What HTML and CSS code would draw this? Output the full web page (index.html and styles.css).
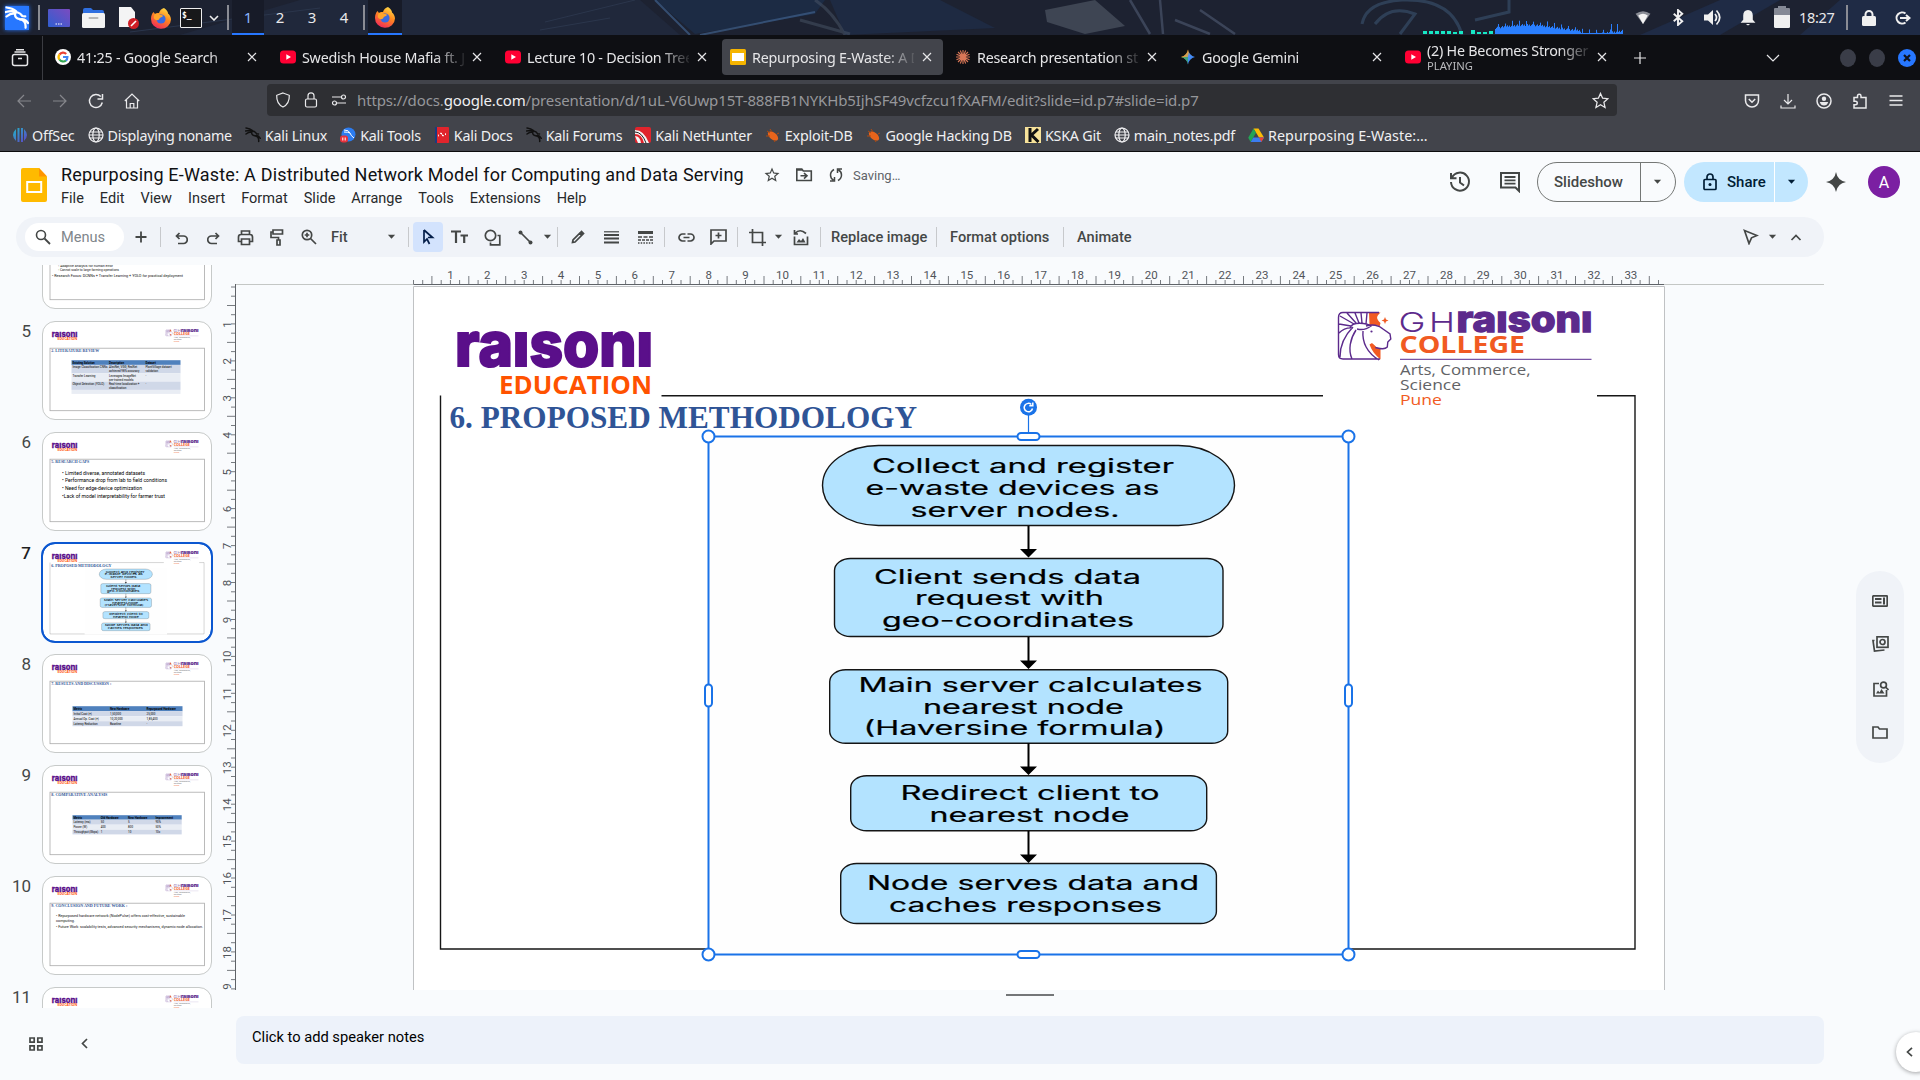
FILE: index.html
```html
<!DOCTYPE html>
<html lang="en">
<head>
<meta charset="utf-8">
<title>Repurposing E-Waste - Google Slides</title>
<link rel="stylesheet" href="styles.css">
</head>
<body>
<svg class="defs" width="0" height="0">
  <defs>
    <linearGradient id="fx-g" x1="0.8" y1="0" x2="0.3" y2="1"><stop offset="0" stop-color="#ffe04a"/><stop offset=".45" stop-color="#ff8a1f"/><stop offset="1" stop-color="#f0285a"/></linearGradient>
    <linearGradient id="desk-g" x1="0" y1="1" x2="1" y2="0"><stop offset="0" stop-color="#2f5fd0"/><stop offset="1" stop-color="#7b4bc0"/></linearGradient>
    <linearGradient id="gem-g" x1="0" y1="0" x2="1" y2="1"><stop offset="0" stop-color="#f04a3a"/><stop offset=".3" stop-color="#f0a030"/><stop offset=".5" stop-color="#4a90f5"/><stop offset="1" stop-color="#2f7bf5"/></linearGradient>
    <linearGradient id="off-g" x1="0" y1="0" x2="1" y2="1"><stop offset="0" stop-color="#20b8c8"/><stop offset="1" stop-color="#6040c8"/></linearGradient>
    <symbol id="i-x" viewBox="0 0 16 16"><path d="M4 4l8 8M12 4l-8 8" class="ln"/></symbol>
    <symbol id="i-arrow" viewBox="0 0 10 6"><path d="M1 .5h8L5 5z" fill="currentColor"/></symbol>
    <symbol id="i-globe" viewBox="0 0 16 16"><g class="ln"><circle cx="8" cy="8" r="7"/><ellipse cx="8" cy="8" rx="3.2" ry="7"/><path d="M1 8h14M2 5h12M2 11h12"/></g></symbol>
    <symbol id="i-dragon" viewBox="0 0 16 16"><path d="M1 1c3 .3 5 1.200 6.500 2.500M.5 4c3-.8 5-.8 7 0 2 .4 3.200 1.200 4 2.700l2 .2M1 7c2-1.700 4-2.200 6-2M7 4.500c-1 2.600.7 3.800 3 4.300 2.800.6 4 2.600 3.700 5.700M10 9c1.700-.8 4 .2 5.300 2.300" fill="none" stroke="currentColor" stroke-width="1.500" stroke-linecap="round"/></symbol>
    <symbol id="i-yt" viewBox="0 0 16 16"><rect y="1.500" width="16" height="13" rx="3.500" fill="#ff0033"/><path d="M6.300 5.300v5.400L11 8z" fill="#fff"/></symbol>
    <symbol id="i-fox" viewBox="0 0 22 22"><path d="M14 1c3 2 4 4 4 5.500 1.500 1 3 3.500 3 6A10 9.500 0 0 1 1 12c0-3 1-5.500 2.500-7l1.500 2c1.500-1 3-1.200 4-1 .8-2.500 2.500-4.200 5-5z" fill="url(#fx-g)"/><circle cx="11" cy="12" r="4.600" fill="#3a6ae0"/><path d="M5 7c2-1 4-.5 5 1 1.500 0 3 .2 3 1-.5 1.500-3 1-3.500 2.500-.3 1.500-2 2-3.500 1.500C3 12 3.500 9 5 7z" fill="#ffa52b"/></symbol>
    <symbol id="i-bug" viewBox="0 0 16 16"><ellipse cx="8" cy="9" rx="6" ry="3.400" transform="rotate(38 8 9)" fill="#e8641b"/><path d="M2 4l3 2M5 2l2 3M1 9l4 0M9 13l1 2M12 7l2-1" stroke="#b04a10" fill="none"/></symbol>
    <g id="brand-left">
      <text class="brand-bold raisoni-l" x="455" y="366.300" textLength="198" lengthAdjust="spacingAndGlyphs">raısonı</text>
      <text class="edu" x="499" y="394" textLength="153" lengthAdjust="spacingAndGlyphs">EDUCATION</text>
    </g>
    <g id="brand-right">
      <g fill="none" stroke="#5c2a8c" stroke-width="1.400">
        <path d="M1369 312.500h11.500c-4.500 4-4.500 6 0 10.500l-1 4-10-2zM1372 343l8.500 6v10.500c-5-4-9-9-11-15z" fill="#f15a22" stroke="none"/>
        <path d="M1371 326c5-2 9 0 12 3l7 5 .8 5-3 3-.5 5c-3 3-7 1.500-11 0l-4-4c-2-6-1-12-1.300-17z" fill="#fff" stroke="none"/>
        <path d="M1366 326c6-2 13-1 17 3l7 5 .8 5-3 3-.5 5c-3 3-7 1.500-12 .5"/>
        <path d="M1380 359h-37q-4.500 0-4.500-4.500v-37q0-5 4.500-5h36M1339 324l12 2M1340 316l14 8M1347 313l9 10M1355 313l4 10M1361 313l1 10M1367 313l-1 11M1339 333q6-6 14-5M1350 328c2-7 17-5 21-2-5 4-10 4-14 3M1353 327c-9 9-13 19-13 30M1356 330c-6 9-8 20-4 29M1363 331c-1 11 4 22 16 29" />
      </g>
      <circle cx="1371.500" cy="331.500" r="1.100" fill="#5c2a8c"/>
      <path d="M1385 317l1 2.500 2.500 1-2.500 1-1 2.500-1-2.500-2.500-1 2.500-1z" fill="#f15a22"/>
      <text class="gh" x="1398.500" y="331.700" textLength="27" lengthAdjust="spacingAndGlyphs">G</text>
      <text class="gh" x="1429" y="331.700" textLength="26" lengthAdjust="spacingAndGlyphs">H</text>
      <text class="brand-bold raisoni-r" x="1456.500" y="331.700" textLength="136" lengthAdjust="spacingAndGlyphs">raısonı</text>
      <text class="college" x="1399.500" y="353" textLength="125.500" lengthAdjust="spacingAndGlyphs">COLLEGE</text>
      <path d="M1400 359.300h191.500" stroke="#7a55a5" stroke-width="1.200"/>
      <text class="dept" x="1400" y="375" textLength="130.500" lengthAdjust="spacingAndGlyphs">Arts, Commerce,</text>
      <text class="dept" x="1400" y="390" textLength="61" lengthAdjust="spacingAndGlyphs">Science</text>
      <text class="dept city" x="1400" y="404.500" textLength="42" lengthAdjust="spacingAndGlyphs">Pune</text>
    </g>
  </defs>
</svg>

<div class="panel">
  <svg class="wall" width="1920" height="35" viewBox="0 0 1920 35" preserveAspectRatio="none">
    <rect width="1920" height="35" fill="#1d2231"/>
    <path d="M180 35L300 0H640L680 35z" fill="#20283b"/>
    <path d="M655 0h170l-10 14-120 20z" fill="#1c2b44"/>
    <path d="M655 0l35 35M815 12L700 35" stroke="#3f608a" stroke-width="2" fill="none" opacity=".7"/>
    <path d="M830 0h110l55 28-150 7z" fill="#1e2a42"/>
    <path d="M815 0q18 12 30 35M800 20l50 14" stroke="#4a5568" stroke-width="3" fill="none" opacity=".5"/>
    <path d="M1045 10L1095 0l30 26-40 8-38-12z" fill="#3e4553"/>
    <path d="M1130 0l20 34M1160 0l3 34M1175 20l35 14M1200 10l35 24" stroke="#5a6580" stroke-width="2.500" fill="none" opacity=".5"/>
    <path d="M1362 24q4-22 40-24 50-2 60 35M1375 24q15-20 40-10l-15 20M1475 20l34-8V0" stroke="#364b66" stroke-width="3" fill="none" opacity=".7"/>
    <path d="M545 22l90-22M540 30l70-12M130 32l190-24" stroke="#2b364c" fill="none"/>
    <path d="M1640 35l80-35h60l-60 35zM1800 35l40-35h80v35z" fill="#1f2b45"/>
  </svg>
  <div class="panel-left">
    <span class="kali"><svg width="24" height="24" viewBox="0 0 16 16"><use href="#i-dragon" width="16" height="16"/></svg></span>
    <i class="psep"></i>
    <svg class="p-desk" width="22" height="18" viewBox="0 0 22 18"><rect width="22" height="18" rx="1" fill="url(#desk-g)"/><path d="M7.500 15h1.500M10 15h1.500M12.500 15h1.500" stroke="#fff" stroke-width="1.200"/></svg>
    <svg class="p-folder" width="23" height="20" viewBox="0 0 23 20"><path d="M1 2q0-2 2-2h6l2 2h9q2 0 2 2v6H1z" fill="#2f6fe0"/><rect y="5" width="23" height="15" rx="1.500" fill="#f2f2f2"/><rect x="6.500" y="9" width="10" height="2" rx="1" fill="#b8b8b8"/></svg>
    <svg class="p-doc" width="22" height="22" viewBox="0 0 22 22"><path d="M1 0h12l4 5v15H1z" fill="#f4f4f4"/><circle cx="15.500" cy="16.500" r="5.500" fill="#d01f26"/><path d="M13 19l5-5" stroke="#fff" stroke-width="1.600"/></svg>
    <svg class="p-fox" width="22" height="22"><use href="#i-fox"/></svg>
    <span class="term">$_</span>
    <svg class="p-chev" width="10" height="6" viewBox="0 0 10 6"><path d="M1 1l4 4 4-4" fill="none" stroke="#eee" stroke-width="1.600"/></svg>
    <i class="psep"></i>
    <span class="ws on">1</span><span class="ws">2</span><span class="ws">3</span><span class="ws">4</span>
    <i class="psep"></i>
    <span class="task"><svg width="22" height="22"><use href="#i-fox"/></svg></span>
  </div>
  <div class="panel-right">
    <svg id="cpu" width="202" height="35" viewBox="0 0 202 35"></svg>
    <svg class="tray" width="16" height="16" viewBox="0 0 16 16"><path d="M1 4.500q7-5 14 0L8 14z" fill="#8a8d96"/><path d="M3.500 6q4.500-3 9 0L8 14z" fill="#f4f4f4"/></svg>
    <svg class="tray" width="16" height="16" viewBox="0 0 16 16"><path d="M4 4.500l8 7-4 3.500V1l4 3.500-8 7" fill="none" stroke="#f0f0f0" stroke-width="1.800"/></svg>
    <svg class="tray" width="18" height="16" viewBox="0 0 18 16"><path d="M0 5h4l5-4.500v15L4 11H0z" fill="#f0f0f0"/><path d="M11 4.500q3 3.500 0 7M12.500 1q6.500 7 0 14" fill="none" stroke="#f0f0f0" stroke-width="1.700"/></svg>
    <svg class="tray" width="16" height="16" viewBox="0 0 16 16"><path d="M8 1c3 0 4.500 2 4.500 5v4L15 13H1l2.500-3V6C3.500 3 5 1 8 1zM6 14h4l-2 1.500z" fill="#f0f0f0"/></svg>
    <svg class="batt" width="16" height="22" viewBox="0 0 16 22"><path d="M4 0h8v2h3q1 0 1 1v7H0V3q0-1 1-1h3z" fill="#858995"/><path d="M0 9h16v11.500q0 1.500-1.500 1.500h-13Q0 22 0 20.500z" fill="#f0f0f0"/></svg>
    <span class="clock">18:27</span>
    <i class="psep r"></i>
    <svg class="lock" width="14" height="16" viewBox="0 0 14 16"><rect y="6" width="14" height="10" rx="1.500" fill="#f0f0f0"/><path d="M3.500 7V4.500a3.500 3.500 0 0 1 7 0V7" fill="none" stroke="#f0f0f0" stroke-width="2"/></svg>
    <svg class="out" width="16" height="14" viewBox="0 0 16 14"><path d="M10.500 2.500A5.600 5.600 0 1 0 10.500 11.500M5 7h9M11 4l3.500 3L11 10" fill="none" stroke="#f0f0f0" stroke-width="2"/></svg>
  </div>
</div>

<div class="tabs">
  <div class="fxview"><svg width="18" height="18" viewBox="0 0 18 18"><g class="ln w"><rect x="1.500" y="5.500" width="15" height="11" rx="2"/><path d="M3.500 3h11M5 .8h8M7 9.500h4"/></g></svg></div>
  <div class="tab"><svg width="16" height="16" viewBox="0 0 16 16"><circle cx="8" cy="8" r="8" fill="#fff"/><g fill="none" stroke-width="2.200"><path d="M4.500 5.500A4.400 4.400 0 0 1 11.200 5" stroke="#ea4335"/><path d="M4.500 5.300a4.600 4.600 0 0 0 0 5.400" stroke="#fbbc05"/><path d="M4.500 10.500a4.400 4.400 0 0 0 6.500 1" stroke="#34a853"/><path d="M8 8h4.400q0 2.300-1.500 3.600" stroke="#4285f4"/></g></svg><span class="tt">41:25 - Google Search</span><svg class="x" width="16" height="16"><use href="#i-x"/></svg></div>
  <div class="tab"><svg width="16" height="16"><use href="#i-yt"/></svg><span class="tt">Swedish House Mafia ft. J</span><svg class="x" width="16" height="16"><use href="#i-x"/></svg></div>
  <div class="tab"><svg width="16" height="16"><use href="#i-yt"/></svg><span class="tt">Lecture 10 - Decision Tree</span><svg class="x" width="16" height="16"><use href="#i-x"/></svg></div>
  <div class="tab sel"><svg width="16" height="16" viewBox="0 0 16 16"><rect width="16" height="16" rx="1.500" fill="#f5b400"/><rect x="2" y="4" width="12" height="8" fill="#fff"/></svg><span class="tt">Repurposing E-Waste: A D</span><svg class="x" width="16" height="16"><use href="#i-x"/></svg></div>
  <div class="tab"><svg width="16" height="16" viewBox="-8 -8 16 16"><path d="M0-7V7M-7 0H7M-5-5L5 5M-5 5L5-5M-2.700-6.500L2.700 6.500M2.700-6.500L-2.700 6.500M-6.500-2.700L6.500 2.700M-6.500 2.700L6.500-2.700" stroke="#d97757" stroke-width="1.100"/></svg><span class="tt">Research presentation str</span><svg class="x" width="16" height="16"><use href="#i-x"/></svg></div>
  <div class="tab"><svg width="16" height="16" viewBox="0 0 16 16"><path d="M8 .5q1 6 7 7.500-6 1.500-7 7.500Q7 9.500 1 8q6-1.500 7-7.500z" fill="url(#gem-g)"/><path d="M1 8q6-1.500 7-7.500V8z" fill="#e8a33a" opacity=".6"/><path d="M1 8q6 1.500 7 7.500V8z" fill="#3aa860" opacity=".8"/></svg><span class="tt">Google Gemini</span><svg class="x" width="16" height="16"><use href="#i-x"/></svg></div>
  <div class="tab"><svg width="16" height="16"><use href="#i-yt"/></svg><span class="tt two">(2) He Becomes Stronger I<small>PLAYING</small></span><svg class="x" width="16" height="16"><use href="#i-x"/></svg></div>
  <svg class="newtab" width="14" height="14" viewBox="0 0 14 14"><path d="M7 1v12M1 7h12" class="ln"/></svg>
  <svg class="tabchev" width="14" height="8" viewBox="0 0 14 8"><path d="M1 1l6 6 6-6" class="ln"/></svg>
  <i class="wb"></i><i class="wb"></i><span class="wb close"><svg width="8" height="8" viewBox="0 0 8 8"><path d="M1 1l6 6M7 1L1 7" stroke="#10131c" stroke-width="2.200"/></svg></span>
</div>

<div class="nav">
  <svg class="n dim" width="16" height="16" viewBox="0 0 16 16"><path d="M15 8H2M8 2L2 8l6 6" class="ln"/></svg>
  <svg class="n dim" width="16" height="16" viewBox="0 0 16 16"><path d="M1 8h13M8 2l6 6-6 6" class="ln"/></svg>
  <svg class="n" width="16" height="16" viewBox="0 0 16 16"><path d="M14.300 9.500A6.500 6.500 0 1 1 12.800 3.600M14.500 1v5h-5" class="ln w"/></svg>
  <svg class="n" width="16" height="16" viewBox="0 0 16 16"><path d="M.8 8L8 1l7.200 7M2.500 7v8h11V7M6.200 15v-4.500h3.600V15" class="ln"/></svg>
  <div class="url">
    <svg width="16" height="16" viewBox="0 0 16 16"><path d="M8 1l6.300 2.300C14.500 9 12.500 13 8 15 3.500 13 1.500 9 1.700 3.300z" class="ln"/></svg>
    <svg width="14" height="16" viewBox="0 0 14 16"><rect x="1.500" y="7" width="11" height="8" rx="1.500" class="ln"/><path d="M4 7V3.800a3 3 0 0 1 6 0V7" class="ln"/></svg>
    <svg width="16" height="12" viewBox="0 0 16 12"><g class="ln"><circle cx="12.500" cy="3" r="2"/><circle cx="3.500" cy="9" r="2"/><path d="M1 3h9M6 9h9"/></g></svg>
    <span class="addr">https://docs.<b>google.com</b>/presentation/d/1uL-V6Uwp15T-888FB1NYKHb5IjhSF49vcfzcu1fXAFM/edit?slide=id.p7#slide=id.p7</span>
    <svg class="fav" width="17" height="17" viewBox="0 0 24 24"><path d="M12 2l3 6.800 7.300.7-5.500 5 1.600 7.300L12 18l-6.400 3.800 1.600-7.300-5.500-5L9 8.800z" fill="none" stroke="currentColor" stroke-width="1.800"/></svg>
  </div>
  <div class="nav-right">
    <svg width="16" height="16" viewBox="0 0 16 16"><path d="M1.500 2h13v5.500a6.500 6.500 0 0 1-13 0zM4.800 6L8 9.200 11.200 6" class="ln w"/></svg>
    <svg width="16" height="16" viewBox="0 0 16 16"><path d="M8 1v9.500M4 7l4 4 4-4M1 12.500V15h14v-2.500" class="ln"/></svg>
    <svg width="16" height="16" viewBox="0 0 16 16"><circle cx="8" cy="8" r="7" class="ln w"/><circle cx="8" cy="5.800" r="2.200" fill="currentColor"/><path d="M3.800 9h8.400q-1 3.500-4.200 3.500T3.800 9z" fill="currentColor"/></svg>
    <svg width="16" height="16" viewBox="0 0 16 16"><path d="M2 4.500h3.500V3a1.700 1.700 0 0 1 3.500 0v1.500h5V15H2v-3.200h1.500a1.700 1.700 0 0 0 0-3.500H2z" class="ln w"/></svg>
    <svg width="16" height="16" viewBox="0 0 16 16"><path d="M1.500 3h13M1.500 7.500h13M1.500 12h13" class="ln w"/></svg>
  </div>
</div>

<div class="marks">
  <span class="bm"><svg width="16" height="16" viewBox="0 0 16 16"><path d="M4 2v12Q1 11 1 8t3-6zM5.500 1H7.500v14H5.500zM9 1h2v14H9zM12 2q3 3 3 6t-3 6z" fill="url(#off-g)"/></svg>OffSec</span>
  <span class="bm tight"><svg width="16" height="16"><use href="#i-globe"/></svg>Displaying noname</span>
  <span class="bm"><svg class="blk" width="16" height="16"><use href="#i-dragon"/></svg>Kali Linux</span>
  <span class="bm"><svg width="16" height="16" viewBox="0 0 16 16"><circle cx="8.500" cy="7.500" r="7" fill="#2c7cf0"/><path d="M4 3q5 0 6 3t4 5M4 5q4 0 6 1" stroke="#fff" fill="none"/><rect y="8.500" width="8" height="7" rx="3" fill="#e8323c"/><path d="M2.800 10.500v3M5.200 10.500v3" stroke="#fff"/></svg>Kali Tools</span>
  <span class="bm"><svg width="16" height="16" viewBox="0 0 16 16"><rect x="1" width="14" height="16" rx="1" fill="#e0242c"/><rect x="1" width="2" height="16" fill="#1c3a80"/><path d="M6 6.500q1.500-1.500 2 1t2 1M5 7.800l-1 .7 1 .7M11 6.500l1 .7-1 .7" stroke="#fff" fill="none"/></svg>Kali Docs</span>
  <span class="bm"><svg class="blk" width="16" height="16"><use href="#i-dragon"/></svg>Kali Forums</span>
  <span class="bm"><svg width="16" height="16" viewBox="0 0 16 16"><rect width="16" height="16" rx="2" fill="#e0242c"/><path d="M0 3q9 0 14 13H9Q7 7 0 7zM0 9q5 0 6 7H3" fill="#f5f5f5"/><path d="M0 5q7 0 11 11" stroke="#222" fill="none"/></svg>Kali NetHunter</span>
  <span class="bm"><svg width="16" height="16"><use href="#i-bug"/></svg>Exploit-DB</span>
  <span class="bm"><svg width="16" height="16"><use href="#i-bug"/></svg>Google Hacking DB</span>
  <span class="bm"><svg width="16" height="16" viewBox="0 0 16 16"><rect width="16" height="16" fill="#f7e29a"/><path d="M5 1v14M13 2L6.500 8l7 7" stroke="#111" stroke-width="3" fill="none"/></svg>KSKA Git</span>
  <span class="bm"><svg width="16" height="16"><use href="#i-globe"/></svg>main_notes.pdf</span>
  <span class="bm wide"><svg width="16" height="16" viewBox="0 0 16 16"><path d="M5.500 1.500h5L16 10.500h-5z" fill="#fbbc05"/><path d="M5.500 1.500L8 5.800 2.700 15 .2 10.700z" fill="#23a455"/><path d="M5.300 10.500H16L13.300 15H2.700z" fill="#3b7df0"/><path d="M11 10.500h5L13.300 15z" fill="#ea4335"/></svg>Repurposing E-Waste:…</span>
</div>

<div class="head">
  <svg class="logo" width="26" height="34" viewBox="0 0 26 34"><path d="M2 0h16l8 8.500V32q0 2-2 2H2q-2 0-2-2V2q0-2 2-2z" fill="#ffba00"/><path d="M18 0l8 8.500h-8z" fill="#ff9500"/><rect x="6.200" y="14" width="14" height="10" fill="none" stroke="#fff" stroke-width="2"/></svg>
  <div class="titles">
    <div class="trow"><span class="title">Repurposing E-Waste: A Distributed Network Model for Computing and Data Serving</span>
      <svg class="t1" width="18" height="18" viewBox="0 0 24 24"><path fill="currentColor" d="M22 9.240l-7.190-.620L12 2 9.190 8.630 2 9.240l5.460 4.730L5.820 21 12 17.270 18.180 21l-1.630-7.030L22 9.240zM12 15.400l-3.760 2.270 1-4.280-3.320-2.880 4.380-.380L12 6.100l1.710 4.040 4.380.380-3.320 2.880 1 4.280L12 15.400z"/></svg>
      <svg class="t2" width="18" height="18" viewBox="0 0 18 18"><path d="M1.800 14.500V3h5l1.500 2h8v9.500zM1.800 4h6" fill="none" stroke="currentColor" stroke-width="1.600"/><path d="M5.500 9.800h6M9 7l3 2.800-3 2.800" fill="none" stroke="currentColor" stroke-width="1.600"/></svg>
      <svg class="t3" width="16" height="16" viewBox="0 0 16 16"><path d="M6 2.500Q2.500 4.500 2.500 8T5.500 13M6.500 10v4H2M10 13.500q3.500-2 3.500-5.500T10.500 3M9.500 6V2H14" fill="none" stroke="currentColor" stroke-width="1.500"/></svg>
      <span class="saving">Saving…</span></div>
    <div class="menus"><span>File</span><span>Edit</span><span>View</span><span>Insert</span><span>Format</span><span>Slide</span><span>Arrange</span><span>Tools</span><span>Extensions</span><span>Help</span></div>
  </div>
  <div class="acts">
    <svg class="a1" width="22" height="22" viewBox="0 0 22 22"><path d="M3 6.500A9 9 0 1 1 2 11M2 2v5.200h5.500M11 6v5.500l4 3" fill="none" stroke="currentColor" stroke-width="2"/></svg>
    <svg class="a2" width="22" height="22" viewBox="0 0 22 22"><path d="M2 2h18v18l-3.500-3.500H2z" fill="none" stroke="currentColor" stroke-width="2"/><path d="M5.500 6h11M5.500 9.300h11M5.500 12.600h11" stroke="currentColor" stroke-width="1.800"/></svg>
    <div class="show"><span>Slideshow</span><i><svg width="9" height="6"><use href="#i-arrow"/></svg></i></div>
    <div class="share"><span><svg width="14" height="18" viewBox="0 0 14 18"><rect x="1" y="6.500" width="12" height="10" rx="1" fill="none" stroke="currentColor" stroke-width="1.700"/><path d="M4 6.500V4a3 3 0 0 1 6 0v2.500" fill="none" stroke="currentColor" stroke-width="1.700"/><circle cx="7" cy="11.500" r="1.500" fill="currentColor"/></svg>Share</span><i><svg width="9" height="6"><use href="#i-arrow"/></svg></i></div>
    <svg class="spark" width="20" height="20" viewBox="0 0 20 20"><path d="M10 0q1.500 8.500 10 10-8.500 1.500-10 10Q8.500 11.500 0 10 8.500 8.500 10 0z" fill="currentColor"/></svg>
    <span class="avatar">A</span>
  </div>
</div>

<div class="tools">
  <div class="search"><svg width="16" height="16" viewBox="0 0 16 16"><circle cx="6" cy="6" r="4.500" fill="none" stroke="currentColor" stroke-width="1.600"/><path d="M9.500 9.500L15 15" stroke="currentColor" stroke-width="1.800"/></svg>Menus</div>
  <span class="c"><svg width="12" height="12" viewBox="0 0 12 12"><path d="M6 .5v11M.5 6h11" stroke="currentColor" stroke-width="1.800"/></svg></span>
  <i class="s"></i>
  <span class="c m1"><svg class="d" width="13" height="13" viewBox="0 0 13 13"><path d="M4.500 1L1.500 4l3 3M2 4h6.500a3.500 3.500 0 0 1 0 7.500H3" class="gi"/></svg></span>
  <span class="c"><svg class="d" width="13" height="13" viewBox="0 0 13 13"><path d="M8.500 1l3 3-3 3M11 4H4.500a3.500 3.500 0 0 0 0 7.500H10" class="gi"/></svg></span>
  <span class="c"><svg width="17" height="17" viewBox="0 0 17 17"><path d="M4.500 5V2h8v3M4.500 12.500H1.500V8q0-2.500 2.500-2.500h9q2.500 0 2.500 2.500v4.500h-3M4.500 10h8v5.500h-8z" class="gi"/></svg></span>
  <span class="c"><svg width="15" height="17" viewBox="0 0 15 17"><path d="M3 1h9.500v4H3zM3 3H1v5.500h7.500V11M7 11h3v5H7z" class="gi"/></svg></span>
  <span class="c"><svg width="16" height="16" viewBox="0 0 16 16"><circle cx="6" cy="6" r="4.700" class="gi"/><path d="M9.500 9.500L15 15M6 3.700v4.600M3.700 6h4.600" class="gi"/></svg></span>
  <span class="fit">Fit<svg width="9" height="6"><use href="#i-arrow"/></svg></span>
  <i class="s"></i>
  <span class="c pick"><svg width="14" height="18" viewBox="0 0 14 18"><path d="M3 2v12l3-3 2.500 5M3 2l8.500 7.500H7" class="gi"/></svg></span>
  <span class="c tx"><svg width="17" height="14" viewBox="0 0 17 14"><path d="M0 1.500h10M5 1.500V13M9.500 5.500H17M13.200 5.500V13" stroke="currentColor" stroke-width="2.200"/></svg></span>
  <span class="c shp"><svg width="17" height="17" viewBox="0 0 17 17"><circle cx="6.500" cy="6.500" r="5.200" class="gi"/><path d="M13.500 6.500h2.300v9.300H6.500v-2.300" class="gi"/></svg></span>
  <span class="c line"><svg width="15" height="15" viewBox="0 0 15 15"><circle cx="2.500" cy="2.500" r="2" fill="currentColor"/><circle cx="12.500" cy="12.500" r="2" fill="currentColor"/><path d="M2.500 2.500l10 10" class="gi"/></svg></span>
  <svg class="ar" width="9" height="6"><use href="#i-arrow"/></svg>
  <i class="s"></i>
  <span class="c m1"><svg width="14" height="14" viewBox="0 0 14 14"><path d="M1.500 12.500l.5-2.500 6.500-6.500 2 2L4 12zM9.500 2.500l1-1 2 2-1 1z" class="gi"/></svg></span>
  <span class="c m1"><svg width="15" height="13" viewBox="0 0 15 13"><path d="M0 .8h15" stroke="currentColor" stroke-width="1.200"/><path d="M0 4h15M0 7.500h15M0 11.500h15" stroke="currentColor" stroke-width="2"/></svg></span>
  <span class="c m2"><svg width="15" height="13" viewBox="0 0 15 13"><path d="M0 1.500h15" stroke="currentColor" stroke-width="3"/><path d="M0 6h15" stroke="currentColor" stroke-width="1.600" stroke-dasharray="4 1.500"/><path d="M0 9h15" stroke="currentColor" stroke-width="1.500" stroke-dasharray="3 1"/><path d="M0 12h15" stroke="currentColor" stroke-width="1.500" stroke-dasharray="1.500 1.200"/></svg></span>
  <i class="s"></i>
  <span class="c m2"><svg width="17" height="9" viewBox="0 0 17 9"><path d="M7.500 1H4.500a3.500 3.500 0 0 0 0 7h3M9.500 1h3a3.500 3.500 0 0 1 0 7h-3M5.500 4.500h6" class="gi"/></svg></span>
  <span class="c"><svg width="17" height="16" viewBox="0 0 17 16"><path d="M1 15V1h15v11H4zM8.500 3.500v6M5.500 6.500h6" class="gi"/></svg></span>
  <i class="s"></i>
  <span class="c crop"><svg width="17" height="17" viewBox="0 0 17 17"><path d="M0 3.500h13.500V17M3.500 0v13.500H17" class="gi"/></svg></span>
  <svg class="ar" width="9" height="6"><use href="#i-arrow"/></svg>
  <span class="c"><svg width="16" height="17" viewBox="0 0 16 17"><path d="M1.500 7.500v8h13v-8M2 4.500Q7-1 13 4.500M1.500 1v4H5" class="gi"/><path d="M3.500 13.500l2.500-3.500 2 2 2-3 2.500 4.500z" fill="currentColor"/></svg></span>
  <i class="s"></i>
  <span class="w1">Replace image</span><i class="s n0"></i><span class="w2">Format options</span><i class="s n0"></i><span class="w3">Animate</span>
  <svg class="ptr" width="16" height="16" viewBox="0 0 16 16"><path d="M1.500 1.500l12.500 5-5.500 2.300-2.500 5.700z" class="gi"/></svg>
  <svg class="ar2" width="9" height="6"><use href="#i-arrow"/></svg>
  <svg class="up" width="12" height="7" viewBox="0 0 12 7"><path d="M1.500 6L6 1.500 10.500 6" class="gi"/></svg>
</div>

<div class="work">
  <div class="film" id="film"></div>
  <svg id="vruler" width="22" height="725" viewBox="214 265 22 725"></svg>
  <div class="stage">
    <svg id="hruler" width="1588" height="20" viewBox="236 265 1588 20"></svg>
    <svg class="canvas" width="1588" height="705" viewBox="236 285 1588 705">
      <path d="M413.500 990V286.500H1664.500V990" fill="#fff" stroke="#c0c2c4"/>
      <g id="slide7">
        <path d="M440.500 395.500V949H1635V395.700H1597M1323 395.700H661.500" fill="none" stroke="#161616" stroke-width="1.400"/>
        <use href="#brand-left"/><use href="#brand-right"/>
        <text class="stitle" x="449.500" y="428" textLength="467.500" lengthAdjust="spacingAndGlyphs">6. PROPOSED METHODOLOGY</text>
        <rect x="709" y="437" width="639" height="517" fill="#fefefe"/>
        <g fill="#b3e3ff" stroke="#151515" stroke-width="1.400">
          <rect x="822.500" y="445.500" width="412" height="80" rx="56" ry="40"/>
          <rect x="834.500" y="558.500" width="388.500" height="78" rx="16" ry="12"/>
          <rect x="829.700" y="669.700" width="398" height="73.500" rx="16" ry="12"/>
          <rect x="850.700" y="775.700" width="356" height="55" rx="16" ry="12"/>
          <rect x="840.700" y="863.500" width="375.700" height="60" rx="16" ry="12"/>
        </g>
        <path d="M1028.500 526v24M1028.500 637v24M1028.500 743v24M1028.500 831v24" stroke="#000" stroke-width="2"/>
        <path d="M1020 549h17l-8.500 8.500zM1020 660.500h17l-8.500 8.500zM1020 766.500h17l-8.500 8.500zM1020 854.500h17l-8.500 8.500z"/>
        <g id="flow" class="flow"></g>
      </g>
      <g class="selbox" fill="#fff" stroke="#1a73e8" stroke-width="2">
        <rect x="708.500" y="436.500" width="640" height="518" fill="none"/>
        <path d="M1028.500 408v28" stroke-width="1.200"/>
        <circle cx="708.500" cy="436.500" r="6"/><circle cx="1348.500" cy="436.500" r="6"/><circle cx="708.500" cy="954.500" r="6"/><circle cx="1348.500" cy="954.500" r="6"/>
        <rect x="1017.500" y="433" width="22" height="7" rx="3.500"/><rect x="1017.500" y="951" width="22" height="7" rx="3.500"/>
        <rect x="705" y="684.500" width="7" height="22" rx="3.500"/><rect x="1345" y="684.500" width="7" height="22" rx="3.500"/>
        <circle cx="1028.500" cy="407.300" r="8.500" fill="#1a73e8" stroke="none"/>
        <path d="M1032.500 408.500a4.200 4.200 0 1 1-1.200-4M1032.800 402.500v3.200h-3.500" fill="none" stroke-width="1.500" class="rot"/>
      </g>
    </svg>
    <div class="grip"><i></i></div>
  </div>
  <div class="side">
    <svg width="16" height="12" viewBox="0 0 16 12"><rect x=".8" y=".8" width="14.400" height="10.400" rx=".8" class="gi"/><path d="M3 4h6.500M3 7.500h6.500M12 2.500v7" stroke="currentColor" stroke-width="2"/></svg>
    <svg width="17" height="16" viewBox="0 0 17 16"><rect x="5" y=".8" width="11" height="10.500" class="gi"/><circle cx="10.500" cy="6" r="2.500" class="gi"/><path d="M2.500 4.500H1l1.500 10.500 10-1" class="gi"/></svg>
    <svg width="17" height="16" viewBox="0 0 17 16"><path d="M7 2.500H2v12.500h12.500V9" class="gi"/><circle cx="11.500" cy="4" r="2.900" class="gi"/><path d="M13.500 6l3 3" class="gi"/><path d="M4 12.500l2-3 1.500 2 2-3.500 3 4.500z" fill="currentColor"/></svg>
    <svg width="16" height="13" viewBox="0 0 16 13"><path d="M1 12V1h5l1.500 2H15v9z" class="gi"/></svg>
  </div>
</div>

<div class="foot">
  <div class="foot-l">
    <svg width="14" height="14" viewBox="0 0 14 14"><path d="M1 1h4.200v4.200H1zM8.800 1H13v4.200H8.800zM1 8.800h4.200V13H1zM8.800 8.800H13V13H8.800z" class="gi"/></svg>
    <svg width="7" height="11" viewBox="0 0 7 11"><path d="M6 1L1.500 5.500 6 10" class="gi"/></svg>
  </div>
  <div class="notes">Click to add speaker notes</div>
  <div class="flap"><svg width="7" height="10" viewBox="0 0 7 10"><path d="M6 .8L1.500 5 6 9.200" class="gi"/></svg></div>
</div>
<script src="app.js"></script>
</body>
</html>
```
FILE: styles.css
```css
* { box-sizing: border-box; }
body { margin: 0; width: 1920px; height: 1080px; overflow: hidden; background: #f9fbfd; font-family: Roboto, "Noto Sans", sans-serif; color: #444746; display: flex; flex-direction: column; }
svg { display: block; flex: none; }
.defs { position: absolute; }
i { font-style: normal; }
.ln { fill: none; stroke: currentColor; stroke-width: 1.2; }
.ln.w { stroke-width: 1.5; }
.gi { fill: none; stroke: currentColor; stroke-width: 1.7; }

/* desktop panel */
.panel { position: relative; height: 35px; flex: none; display: flex; justify-content: space-between; font-family: "Noto Sans", sans-serif; font-size: 15px; color: #e8e8ea; overflow: hidden; }
.wall { position: absolute; left: 0; top: 0; }
.panel-left, .panel-right { position: relative; display: flex; align-items: center; }
.kali { width: 24px; height: 24px; margin: 0 9px 0 5px; background: #2777ff; box-shadow: 0 0 4px #2777ff; color: #fff; }
.psep { width: 2px; height: 25px; background: #8a8c94; }
.p-desk { margin-left: 8px; }
.p-folder { margin-left: 12px; }
.p-doc { margin-left: 13px; }
.p-fox { margin-left: 10px; }
.term { width: 22px; height: 20px; margin-left: 8px; background: #17181a; border: 1px solid #eee; border-radius: 1px; font: bold 8px/9px "DejaVu Sans Mono", monospace; color: #fff; padding: 2px 1px; }
.p-chev { margin: 0 8px 0 7px; }
.ws { width: 32px; height: 35px; line-height: 34px; text-align: center; }
.psep + .ws { margin-left: 3px; }
.ws + .psep { margin-left: 3px; }
.ws.on { background: #171b28; border-bottom: 2px solid #2777ff; width: 32px; color: #8ab4f8; }
.task { height: 35px; width: 34px; margin-left: 3px; background: #171b28; border-bottom: 2px solid #2777ff; padding: 6px; }
#cpu { margin-right: 9px; }
.tray { width: 18px; height: 17px; margin-right: 17px; }
.batt { margin-right: 9px; margin-top: -1px; }
.clock { width: 37px; font-size: 14.500px; letter-spacing: -.3px; white-space: nowrap; margin-top: -1px; }
.psep.r { margin: 0 14px 0 10px; }
.out { margin: 0 9px 0 19px; }

/* browser tabs */
.tabs { height: 45px; flex: none; background: #0e0f13; display: flex; align-items: center; color: #e6e6e8; font-family: "Noto Sans", sans-serif; font-size: 14.300px; letter-spacing: -.23px; }
.fxview { width: 43px; height: 44px; border-right: 1px solid #3b3c42; padding: 13px 0 0 11px; margin-right: 4px; }
.tab { width: 221px; height: 36px; margin: 0 4px 0 0; margin-top: -1px; padding-left: 8px; display: flex; align-items: center; border-radius: 4px; flex: none; }
.tab.sel { background: #42444b; }
.tt { width: 162px; margin-left: 6px; white-space: nowrap; mask-image: linear-gradient(90deg, #000 132px, transparent 166px); }
.tt.two { line-height: 17px; margin-top: 0; }
.tt small { display: block; font-size: 11.200px; line-height: 14px; color: #b9babd; letter-spacing: 0; }
.x { margin-left: 5px; }
.newtab { margin-left: 11px; }
.tabchev { margin-left: 119px; margin-right: 60px; }
.wb { width: 16px; height: 18px; border-radius: 50%; background: #3a3d48; margin-right: 13px; }
.wb.close { width: 18px; background: #2777ff; margin: 0; padding: 5px; }

/* address row and bookmarks */
.nav { height: 41px; flex: none; background: #42444b; color: #eaeaec; display: flex; align-items: center; padding-left: 16px; }
.n { margin-right: 20px; }
.n.dim { opacity: .4; }
.url { width: 1350px; height: 32px; margin-left: 107px; margin-top: -1px; background: #2e2f33; border-radius: 4px; display: flex; align-items: center; gap: 13px; padding-left: 8px; }
.addr { font: 15px "Noto Sans", sans-serif; letter-spacing: -.135px; color: #96979b; white-space: nowrap; margin-left: -3px; width: 1222px; }
.addr b { font-weight: 400; color: #f0f0f2; }
.nav-right { display: flex; gap: 20px; margin-left: 127px; }
.marks { height: 31px; flex: none; background: #42444b; border-bottom: 1px solid #0c0c0d; display: flex; align-items: center; gap: 13px; padding: 0 0 2px 12px; color: #f0f0f2; font: 14.300px "Noto Sans", sans-serif; letter-spacing: -.21px; }
.bm { display: flex; align-items: center; gap: 4px; white-space: nowrap; }
.bm.tight { letter-spacing: -.31px; }
.bm.wide { letter-spacing: .04px; }
.blk { color: #111; }

/* document header */
.head { height: 65px; flex: none; display: flex; padding-left: 21px; }
.logo { margin-top: 16px; }
.titles { margin: 11px 0 0 14px; width: 870px; }
.trow { height: 24px; display: flex; align-items: center; }
.title { font-size: 18px; letter-spacing: .17px; color: #101113; white-space: nowrap; width: 683px; margin-top: -2px; }
.t1 { margin-left: 19px; }
.t2 { margin-left: 14px; }
.t3 { margin-left: 15px; }
.saving { font-size: 13px; margin-left: 9px; color: #5f6368; }
.menus { display: flex; gap: 16px; margin: 2px 0 0; font-size: 14.500px; line-height: 19px; letter-spacing: .02px; color: #27292b; }
.acts { margin-left: auto; display: flex; align-items: center; height: 40px; margin-top: 10px; padding-right: 20px; }
.a1 { margin-right: 28px; }
.a2 { margin-right: 16px; }
.show, .share { height: 40px; border-radius: 20px; display: flex; align-items: center; font-weight: 500; font-size: 15px; }
.show { width: 139px; border: 1px solid #747775; margin-right: 8px; }
.show span { width: 102px; padding-left: 16px; }
.show i { height: 38px; border-left: 1px solid #747775; padding: 16px 0 0 12px; flex: 1; }
.share { width: 124px; background: #c2e7ff; color: #001d35; margin-right: 18px; }
.share span { width: 90px; display: flex; align-items: center; gap: 10px; padding-left: 19px; }
.share i { height: 40px; border-left: 1px solid #fff; flex: 1; padding: 17px 0 0 12px; }
.avatar { width: 32px; height: 32px; border-radius: 50%; background: #7b1fa2; color: #fff; font-size: 16px; line-height: 33px; text-align: center; margin-left: 22px; }

/* toolbar */
.tools { width: 1808px; height: 40px; flex: none; margin-left: 16px; border-radius: 20px; background: #f0f3f8; display: flex; align-items: center; padding-left: 9px; font-size: 14.600px; font-weight: 500; white-space: nowrap; }
.search { width: 99px; height: 28px; border-radius: 14px; background: #fff; display: flex; align-items: center; gap: 10px; padding-left: 10px; font-weight: 400; color: #80868b; margin-right: 1px; }
.search svg { color: #444746; }
.c { width: 32px; height: 30px; display: flex; align-items: center; justify-content: center; }
.d { margin-top: 3px; }
.s { width: 1px; height: 20px; background: #c7c9cc; margin: 0 3px; }
.fit { width: 79px; height: 30px; padding-left: 6px; display: flex; align-items: center; justify-content: space-between; padding-right: 8px; margin-right: 1px; }
.pick { width: 30px; background: #d3e3fd; border-radius: 4px; margin: 0 1px; color: #041e49; }
.ar { margin-left: 2px; margin-right: 2px; }
.tx { width: 31px; }
.shp { width: 34px; }
.line { margin-left: 0; }
.m1 { margin-left: 1px; }
.m2 { margin-left: 2px; }
.crop { margin-right: -1px; }
.w1 { margin: 0 8px 0 7px; width: 97px; }
.s.n0 { margin: 0; }
.w2 { margin: 0 0 0 13px; width: 113px; }
.w3 { margin-left: 13px; }
.ptr { margin-left: auto; }
.ar2 { margin: 0 13px 0 9px; }
.up { margin-right: 22px; }

/* workspace */
.work { height: 743px; flex: none; margin-top: 8px; display: flex; align-items: flex-start; }
.film { width: 214px; height: 743px; overflow: hidden; }
.row { display: flex; height: 111px; }
.row:first-child { margin-top: -55px; }
.num { width: 31px; text-align: right; font-size: 17px; line-height: 19px; margin-top: 1px; }
.thumb { width: 170px; height: 99px; margin-left: 11px; border: 1px solid #c7cac9; border-radius: 13px; background: #fff; overflow: hidden; }
.thumb svg { margin: -.5px; }
.row.cur .thumb { outline: 2px solid #0b57d0; outline-offset: -1px; border-color: #0b57d0; }
.row.cur .num { color: #1f1f1f; font-weight: 500; }
.stage { width: 1588px; }
.canvas { background: #f9fbfd; }
.grip { height: 18px; padding: 4px 0 0 770px; }
.grip i { display: block; width: 48px; height: 2px; background: #747678; }
.side { width: 48px; height: 192px; border-radius: 24px; background: #f0f3f8; margin: 306px 0 0 32px; display: flex; flex-direction: column; align-items: center; justify-content: space-between; padding: 24px 0; }
.rt { font: 11.500px Roboto, sans-serif; fill: #50545a; text-anchor: middle; }

/* slide art */
.brand-bold { font-family: Inter, sans-serif; font-weight: 800; fill: #5a0f8a; stroke: #5a0f8a; }
.raisoni-l { font-size: 61px; stroke-width: 2px; }
.raisoni-r { font-size: 36px; fill: #5c2a8c; stroke: #5c2a8c; stroke-width: 1.300px; }
.edu { font: 700 25px "Open Sans", sans-serif; fill: #ff5200; }
.gh { font: 300 27px Inter, sans-serif; fill: #5c2a8c; }
.college { font: 700 22.500px "Open Sans", sans-serif; fill: #f15a22; }
.dept { font: 14.500px "Open Sans", sans-serif; fill: #626366; }
.dept.city { fill: #f15a22; }
.stitle { font: bold 32px "Liberation Serif", serif; fill: #2f5496; }
.flow { font: 400 19.500px Inter, sans-serif; fill: #000; stroke: #000; stroke-width: .2px; }
.rot { stroke: #fff; }
.tiny-title { font: bold 4.400px "Liberation Serif", serif; fill: #2f5496; }
.tiny { font: 3.600px Roboto, sans-serif; fill: #111; }
.cell { font: 2.950px Roboto, sans-serif; fill: #000; }
.cell.b { font-weight: 700; }
.bul { font: 4.900px Roboto, sans-serif; fill: #000; }

/* footer */
.foot { height: 72px; flex: none; display: flex; }
.foot-l { width: 236px; height: 72px; display: flex; align-items: center; gap: 38px; padding: 0 0 1px 29px; }
.notes { width: 1588px; height: 48px; margin-top: 8px; border-radius: 8px; background: #edf2fa; color: #000; font-size: 14.700px; line-height: 43px; padding-left: 16px; }
.flap { width: 40px; height: 40px; border-radius: 50%; background: #fff; box-shadow: 0 1px 4px rgba(0,0,0,.35); margin: 24px -40px 0 72px; padding: 15px 0 0 10px; flex: none; }
```
FILE: app.js
```js
const byId = (id) => document.getElementById(id);

// Rulers: quarter-unit ticks, long tick at every half unit.
let h = '<path d="M236 284.500H1824" stroke="#c4c7c5"/><path d="M413.500 284.500H1664" stroke="#5f6368"/>';
for (let q = 0; q <= 135; q++) {
  const x = 413.500 + q * 36.890 / 4;
  h += `<path d="M${x.toFixed(1)} ${q % 4 === 2 ? 276 : 280}V284" stroke="#777b80"/>`;
  if (q && q % 4 === 0) h += `<text class="rt" x="${x}" y="279">${q / 4}</text>`;
}
byId('hruler').innerHTML = h;

let v = '<path d="M235.500 284V990" stroke="#5f6368"/>';
for (let q = 0; q <= 76; q++) {
  const y = 287 + q * 36.940 / 4;
  v += `<path d="M${q % 4 === 2 ? 227 : 231} ${y.toFixed(1)}H235" stroke="#777b80"/>`;
  if (q && q % 4 === 0) {
    const n = q / 4;
    v += `<text class="rt" transform="translate(230.500 ${n === 19 ? 986.500 : y + .500}) rotate(-90)">${n === 19 ? 9 : n}</text>`;
  }
}
byId('vruler').innerHTML = v;

// Flowchart labels: text, x, baseline, width.
byId('flow').innerHTML = [
  ['Collect and register', 872, 472.800, 302], ['e-waste devices as', 865.500, 494.900, 294], ['server nodes.', 910.500, 516.700, 209],
  ['Client sends data', 874, 583.500, 267], ['request with', 915, 605.400, 189], ['geo-coordinates', 882, 627, 252],
  ['Main server calculates', 858.500, 692.300, 344], ['nearest node', 923, 713.900, 201], ['(Haversine formula)', 863.500, 735, 302],
  ['Redirect client to', 900.500, 799.700, 259], ['nearest node', 929.500, 821.500, 200],
  ['Node serves data and', 867, 889.900, 332], ['caches responses', 889, 911.500, 273],
].map(([t, x, y, w]) => `<text x="${x}" y="${y}" textLength="${w}" lengthAdjust="spacingAndGlyphs">${t}</text>`).join('');

// Filmstrip.
const table = (x, y, cols, heights, rows) => {
  let s = '', cy = y;
  const total = cols.reduce((a, b) => a + b, 0);
  heights.forEach((rh, r) => {
    s += `<rect x="${x}" y="${cy}" width="${total}" height="${rh}" fill="${r === 0 ? '#4f81bd' : r % 2 ? '#d0d8e8' : '#e9edf4'}"/>`;
    let cx = x;
    (rows[r] || []).forEach((cell, c) => {
      cell.split('|').forEach((line, k) => { s += `<text class="cell${r ? '' : ' b'}" x="${cx + 1}" y="${cy + 3.300 + k * 4}">${line}</text>`; });
      cx += cols[c];
    });
    cy += rh;
  });
  return s;
};
const bullets = (items) => items.map(([t, x, y, w, c = 'bul']) => `<text class="${c}" x="${x}" y="${y}" textLength="${w}" lengthAdjust="spacingAndGlyphs">${t}</text>`).join('');
const slides = [
  { n: '', title: '', tw: 0, body: bullets([['◦ Adaptive analysis for human error', 15, 56, 55, 'tiny'], ['◦ Cannot scale to large farming operations', 15, 60.200, 61, 'tiny'], ['• Research Focus: DCNNs + Transfer Learning + YOLO for practical deployment', 9, 66.200, 131, 'tiny']]) },
  { n: 5, title: '2. LITERATURE REVIEW', tw: 48, body: table(28.500, 38.200, [36.500, 36.500, 36], [4.700, 8.400, 8.300, 8.300, 4], [['Existing Solution', 'Description', 'Dataset'], ['Image Classification CNNs', 'AlexNet, VGG, ResNet|achieved 98% accuracy', 'PlantVillage dataset|validation'], ['Transfer Learning', 'Leverages ImageNet|pre-trained models', '-'], ['Object Detection (YOLO)', 'Real-time localization +|classification', '-']]) },
  { n: 6, title: '5. RESEARCH GAPS', tw: 38, body: bullets([['• Limited diverse, annotated datasets', 19, 41.800, 83], ['• Performance drop from lab to field conditions', 19, 49, 105], ['• Need for edge-device optimization', 19, 56.800, 80], ['•Lack of model interpretability for farmer trust', 19, 64.600, 103]]) },
  { n: 7, full: true },
  { n: 8, title: '7. RESULTS AND DISCUSSION :', tw: 60, body: table(29.500, 51.200, [36.500, 36.500, 37], [5, 5, 5, 5], [['Metric', 'New Hardware', 'Repurposed Hardware'], ['Initial Cost (₹)', '1,50,000', '25,000'], ['Annual Op. Cost (₹)', '10,20,000', '1,85,400'], ['Latency Reduction', 'Baseline', '-']]) },
  { n: 9, title: '8. COMPARATIVE ANALYSIS', tw: 56, body: table(29.500, 49.200, [27.300, 27.300, 27.300, 27.300], [4.500, 5, 5, 4.700], [['Metric', 'Old Hardware', 'New Hardware', 'Improvement'], ['Latency (ms)', '50', '5', '90%'], ['Power (W)', '400', '800', '50%'], ['Throughput (Gbps)', '1', '10', '10x']]) },
  { n: 10, title: '9. CONCLUSION AND FUTURE WORK :', tw: 76, body: bullets([['• Repurposed hardware network (NodePulse) offers cost-effective, sustainable', 13, 39.800, 129, 'tiny'], ['computing.', 13, 45, 19, 'tiny'], ['• Future Work: scalability tests, advanced security mechanisms, dynamic node allocation.', 13, 50.800, 147, 'tiny']]) },
  { n: 11, title: '', tw: 0, body: '' },
];
const place = 'transform="translate(3.500 4.500) scale(.129) translate(-413.500 -286.500)"';
byId('film').innerHTML = slides.map((s) => {
  const art = s.full ? `<use href="#slide7" ${place}/>`
    : `<g ${place}><use href="#brand-left"/><use href="#brand-right"/></g><rect x="7" y="26.200" width="154.500" height="62.500" fill="none" stroke="#aaa" stroke-width=".8"/>`
      + (s.title ? `<text class="tiny-title" x="8.300" y="30.300" textLength="${s.tw}" lengthAdjust="spacingAndGlyphs">${s.title}</text>` : '') + s.body;
  return `<div class="row${s.full ? ' cur' : ''}"><div class="num">${s.n}</div><div class="thumb"><svg width="169" height="98" viewBox="0 0 169 98">${art}</svg></div></div>`;
}).join('');

// CPU and network graph in the panel.
let g = '';
[2, 2, 2, 2, 2, 1, 2, 0, 3, 1, 1, 2].forEach((n, i) => { if (n) g += `<rect x="${i * 6}" y="${n === 3 ? 30 : n === 2 ? 31 : 32}" width="4" height="${n + 1}" fill="#17e8c4"/>`; });
for (let i = 0; i < 128; i++) {
  const base = 5 + 3 * Math.sin(i / 20) + (i % 7 === 3 ? 4 : 0) + (i * 37 % 5) * .500 - (i > 85 ? 3 : 0);
  const hgt = i === 116 || i === 122 ? 10 : Math.max(1, base);
  g += `<rect x="${72 + i}" y="${34 - hgt}" width="1" height="${hgt}" fill="#2a7fff"/>`;
}
byId('cpu').innerHTML = g;
```
